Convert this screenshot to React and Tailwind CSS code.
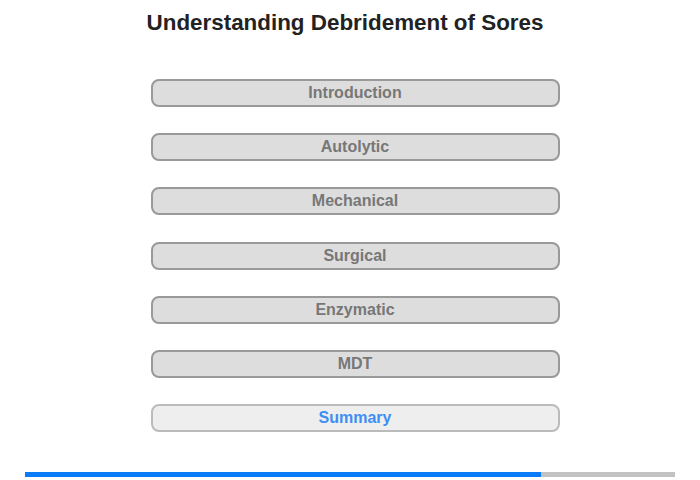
export default function App() {
  const sections = ['Introduction', 'Autolytic', 'Mechanical', 'Surgical', 'Enzymatic', 'MDT'];

  return (
    <div className="w-[700px] h-[480px] bg-white font-['Liberation_Sans',Arial,sans-serif] flex flex-col">
      <h1 className="text-[22.4px] font-bold text-[#222] text-center pt-[10px] pr-[10px] leading-[26px]">
        Understanding Debridement of Sores
      </h1>
      <div className="flex flex-col items-center gap-[26.2px] mt-[43px] pl-[10px]">
        {sections.map((s) => (
          <button
            key={s}
            className="w-[409px] h-[28px] rounded-[8px] border-2 border-[#999] bg-[#ddd] text-[#777] font-bold text-[16px] leading-none"
          >
            {s}
          </button>
        ))}
        <button className="w-[409px] h-[28px] rounded-[8px] border-2 border-[#bbb] bg-[#eee] text-[#3d8ef5] font-bold text-[16px] leading-none">
          Summary
        </button>
      </div>
      <div className="mx-[25px] mt-[40px] h-[5px] bg-[#c2c2c2] flex">
        <div className="w-[516px] h-full bg-[#0a7cf7]" />
      </div>
    </div>
  );
}
